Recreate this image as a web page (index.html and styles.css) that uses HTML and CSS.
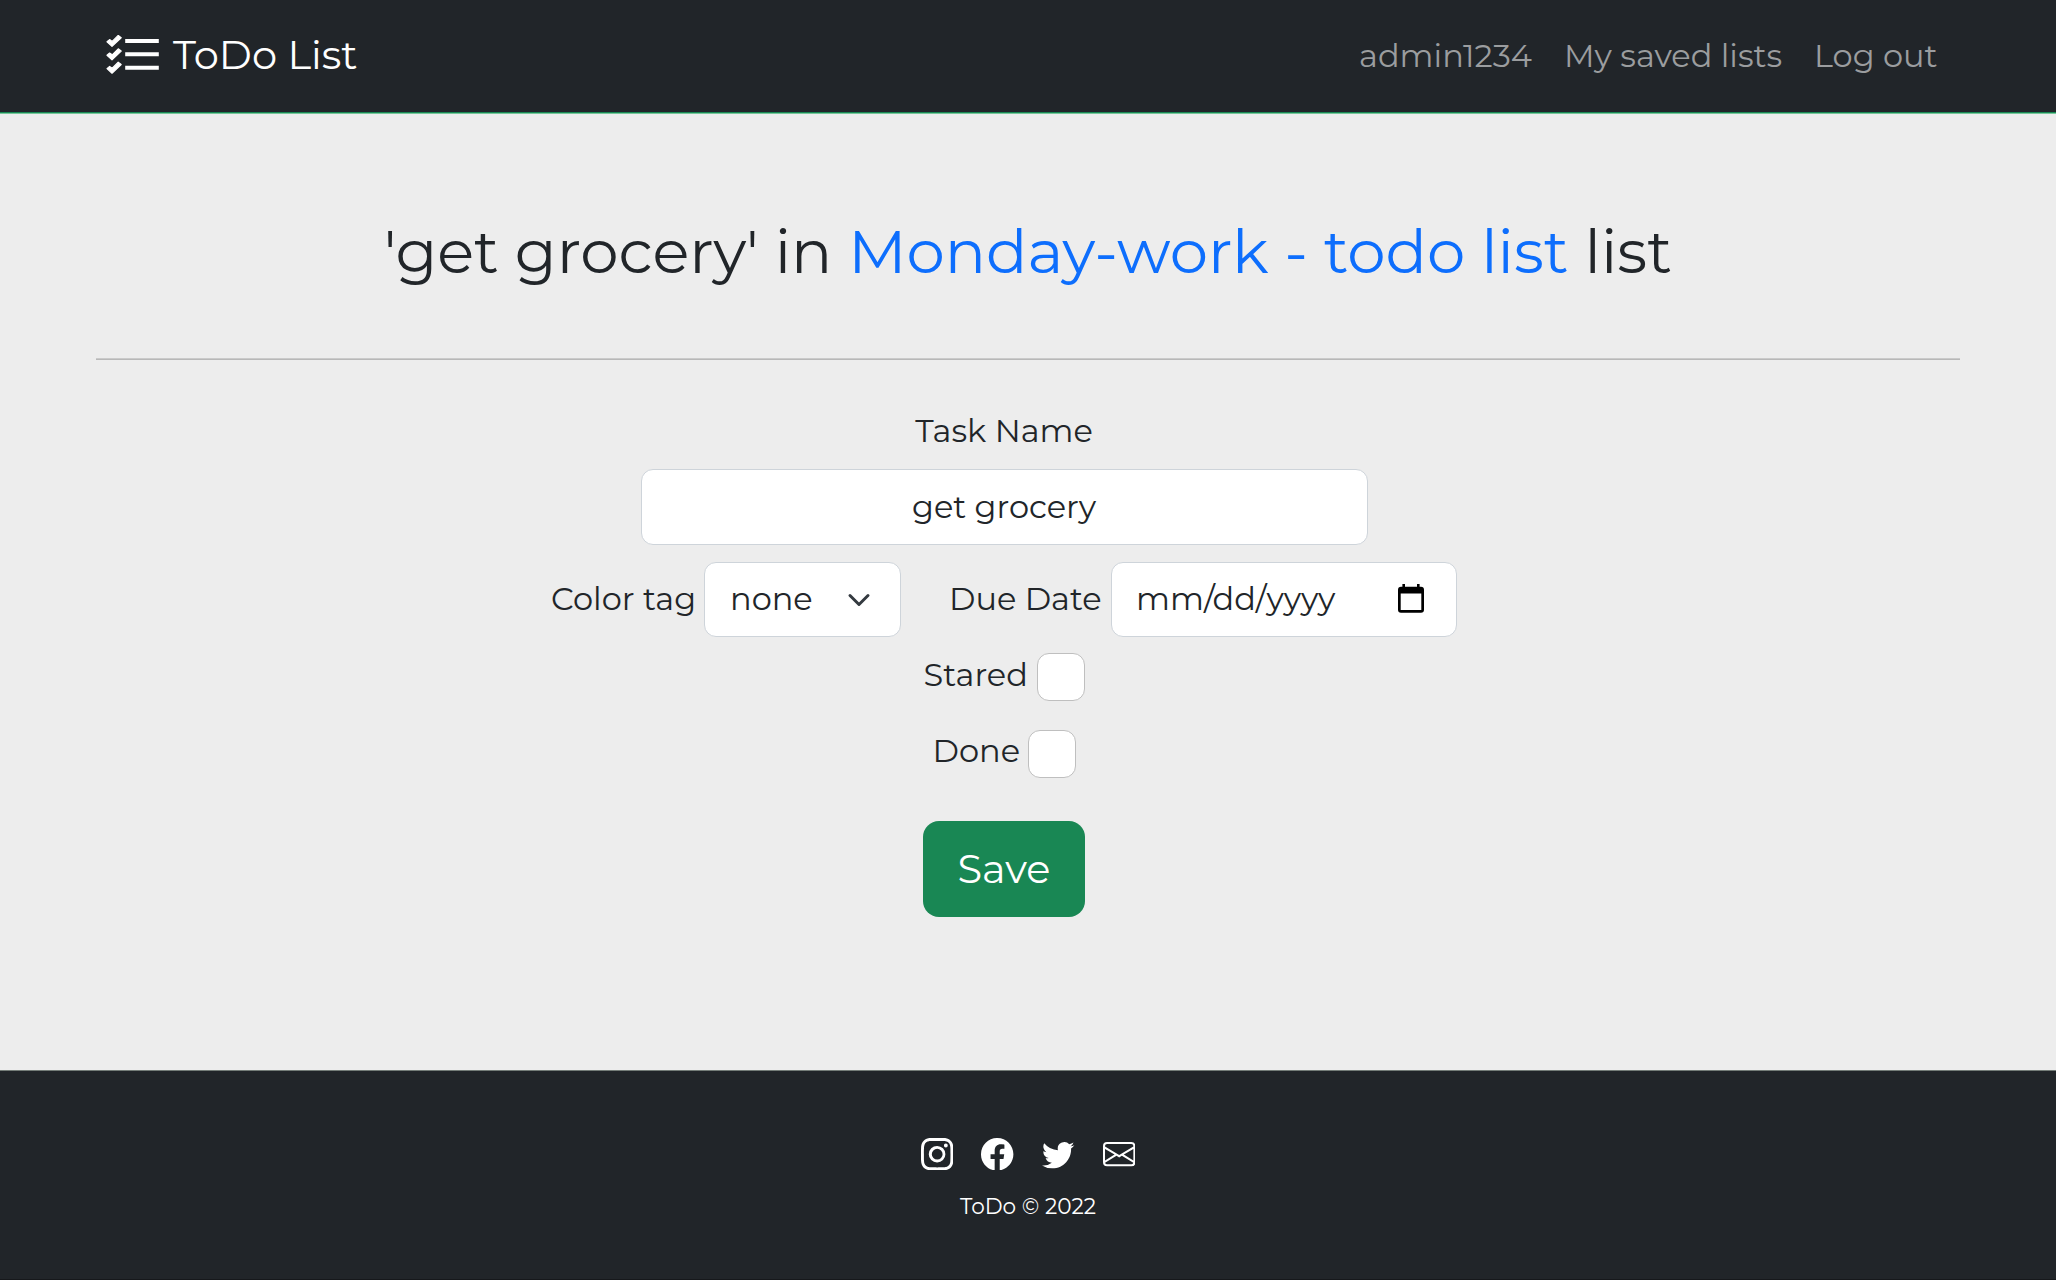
FILE: index.html
```
<!DOCTYPE html>
<html lang="en">
<head>
<meta charset="utf-8">
<title>ToDo List</title>
<link rel="stylesheet" href="styles.css">
</head>
<body>
<header class="navbar">
  <a class="brand" href="#">
    <svg class="brand-icon" width="54" height="40" viewBox="0 0 54 40" fill="#fff">
      <path id="tick" d="M1 6.800 3.600 4.600 6.200 6.400 12.200.400 15.200 2.700 6 11.400z" stroke="#fff" stroke-width="1.200" stroke-linejoin="round"/>
      <use href="#tick" y="13.400"/>
      <use href="#tick" y="26.800"/>
      <path d="M19.200 4h33.600v4H19.200zM19.200 17.200h33.600v4H19.200zM19.200 30.800h33.600v4H19.200z"/>
    </svg>
    <span>ToDo List</span>
  </a>
  <nav class="links">
    <a href="#">admin1234</a>
    <a href="#">My saved lists</a>
    <a href="#">Log out</a>
  </nav>
</header>
<main>
  <h1>'get grocery' in <a href="#">Monday-work - todo list</a> list</h1>
  <div class="rule"></div>
  <form class="task">
    <label class="name-label" for="name">Task Name</label>
    <input class="field name" id="name" type="text" value="get grocery">
    <div class="row">
      <span class="color-label">Color tag</span>
      <div class="field select">
        <span>none</span>
        <svg width="24" height="24" viewBox="0 0 16 16" fill="none" stroke="#343a40" stroke-width="2" stroke-linecap="round" stroke-linejoin="round"><path d="m2 5 6 6 6-6"/></svg>
      </div>
      <span class="due-label">Due Date</span>
      <div class="field date">
        <span>mm/dd/yyyy</span>
        <svg width="26" height="29" viewBox="0 0 26 29"><path fill-rule="evenodd" d="M4.400 0h2.600v2.800h12V0h2.600v2.800H23a3 3 0 0 1 3 3V25.800a3 3 0 0 1-3 3H3a3 3 0 0 1-3-3V5.800a3 3 0 0 1 3-3h1.400zM2.700 9.400V26.100H23.300V9.400z"/></svg>
      </div>
    </div>
    <div class="check-row stared"><label for="stared">Stared</label><input id="stared" type="checkbox"></div>
    <div class="check-row done"><label for="done">Done</label><input id="done" type="checkbox"></div>
    <button class="save" type="button">Save</button>
  </form>
</main>
<footer>
  <div class="social">
    <svg viewBox="0 0 16 16"><path d="M8 0C5.829 0 5.556.01 4.703.048 3.850.088 3.269.222 2.760.420a3.917 3.917 0 0 0-1.417.923A3.927 3.927 0 0 0 .420 2.760C.222 3.268.087 3.850.048 4.700.010 5.555 0 5.827 0 8.001c0 2.172.010 2.444.048 3.297.040.852.174 1.433.372 1.942.205.526.478.972.923 1.417.444.445.890.719 1.416.923.510.198 1.090.333 1.942.372C5.555 15.990 5.827 16 8 16s2.444-.010 3.298-.048c.851-.040 1.434-.174 1.943-.372a3.916 3.916 0 0 0 1.416-.923c.445-.445.718-.891.923-1.417.197-.509.332-1.090.372-1.942C15.990 10.445 16 10.173 16 8s-.010-2.445-.048-3.299c-.040-.851-.175-1.433-.372-1.941a3.926 3.926 0 0 0-.923-1.417A3.911 3.911 0 0 0 13.240.420c-.510-.198-1.092-.333-1.943-.372C10.443.010 10.172 0 7.998 0h.003zm-.717 1.442h.718c2.136 0 2.389.007 3.232.046.780.035 1.204.166 1.486.275.373.145.640.319.920.599.280.280.453.546.598.920.110.281.240.705.275 1.485.039.843.047 1.096.047 3.231s-.008 2.389-.047 3.232c-.035.780-.166 1.203-.275 1.485a2.470 2.470 0 0 1-.599.919c-.280.280-.546.453-.920.598-.280.110-.704.240-1.485.276-.843.038-1.096.047-3.232.047s-2.390-.009-3.233-.047c-.780-.036-1.203-.166-1.485-.276a2.478 2.478 0 0 1-.920-.598 2.480 2.480 0 0 1-.600-.920c-.109-.281-.240-.705-.275-1.485-.038-.843-.046-1.096-.046-3.233 0-2.136.008-2.388.046-3.231.036-.780.166-1.204.276-1.486.145-.373.319-.640.599-.920.280-.280.546-.453.920-.598.282-.110.705-.240 1.485-.276.738-.034 1.024-.044 2.515-.045v.002zm4.988 1.328a.960.960 0 1 0 0 1.920.960.960 0 0 0 0-1.920zm-4.270 1.122a4.109 4.109 0 1 0 0 8.217 4.109 4.109 0 0 0 0-8.217zm0 1.441a2.667 2.667 0 1 1 0 5.334 2.667 2.667 0 0 1 0-5.334z"/></svg>
    <svg viewBox="0 0 16 16"><path d="M16 8.049c0-4.446-3.582-8.050-8-8.050C3.580 0-.002 3.603-.002 8.050c0 4.017 2.926 7.347 6.750 7.951v-5.625h-2.030V8.050H6.750V6.275c0-2.017 1.195-3.131 3.022-3.131.876 0 1.791.157 1.791.157v1.980h-1.009c-.993 0-1.303.621-1.303 1.258v1.510h2.218l-.354 2.326H9.250V16c3.824-.604 6.750-3.934 6.750-7.951z"/></svg>
    <svg viewBox="0 0 16 16"><path d="M5.026 15c6.038 0 9.341-5.003 9.341-9.334 0-.140 0-.282-.006-.422A6.685 6.685 0 0 0 16 3.542a6.658 6.658 0 0 1-1.889.518 3.301 3.301 0 0 0 1.447-1.817 6.533 6.533 0 0 1-2.087.793A3.286 3.286 0 0 0 7.875 6.030a9.325 9.325 0 0 1-6.767-3.429 3.289 3.289 0 0 0 1.018 4.382A3.323 3.323 0 0 1 .640 6.575v.045a3.288 3.288 0 0 0 2.632 3.218 3.203 3.203 0 0 1-.865.115 3.230 3.230 0 0 1-.614-.057 3.283 3.283 0 0 0 3.067 2.277A6.588 6.588 0 0 1 .780 13.580a6.320 6.320 0 0 1-.780-.045A9.344 9.344 0 0 0 5.026 15z"/></svg>
    <svg viewBox="0 0 16 16"><path d="M0 4a2 2 0 0 1 2-2h12a2 2 0 0 1 2 2v8a2 2 0 0 1-2 2H2a2 2 0 0 1-2-2V4Zm2-1a1 1 0 0 0-1 1v.217l7 4.200 7-4.200V4a1 1 0 0 0-1-1H2Zm13 2.383-4.708 2.825L15 11.105V5.383Zm-.034 6.876-5.640-3.471L8 9.583l-1.326-.795-5.640 3.470A1 1 0 0 0 2 13h12a1 1 0 0 0 .966-.741ZM1 11.105l4.708-2.897L1 5.383v5.722Z"/></svg>
  </div>
  <p>ToDo © 2022</p>
</footer>
</body>
</html>
```
FILE: styles.css
```
* { box-sizing: border-box; }
body {
  margin: 0;
  height: 1280px;
  display: flex;
  flex-direction: column;
  background: #ededed;
  color: #212529;
  font: 400 32px/46px Montserrat, Inter, sans-serif;
}
a { text-decoration: none; }

.navbar {
  height: 113px;
  padding: 0 96px 2px 106px;
  display: flex;
  align-items: center;
  justify-content: space-between;
  background: #212529;
  border-bottom: 1px solid #198754;
}
.brand {
  display: flex;
  align-items: center;
  gap: 13px;
  color: #fff;
  font-size: 40px;
}
.links { display: grid; grid-template-columns: 205px 250px 146px; padding-top: 2px; }
.links a { color: #9b9d9f; white-space: nowrap; }

main {
  flex: 1;
  padding: 107px 96px 0;
  border-top: 1px solid #76c79a;
}
h1 {
  margin: 0;
  text-align: center;
  font-size: 61px;
  font-weight: 400;
  line-height: 60px;
}
h1 a { color: #0d6efd; }
.rule {
  height: 2px;
  margin-top: 77px;
  background: #b8b8b8;
  border-top: 1px solid #cacaca;
}

.task {
  display: flex;
  flex-direction: column;
  align-items: center;
  padding: 48px 48px 0 0;
}
.field {
  background: #fff;
  border: 1px solid #ced4da;
  border-radius: 12px;
}
.name {
  width: 727px;
  height: 76px;
  margin-top: 15px;
  padding: 0 0 2px;
  text-align: center;
  color: #212529;
  font: inherit;
}
.row { display: flex; align-items: center; margin-top: 17px; white-space: nowrap; }
.row span { padding-bottom: 2px; }
.color-label { width: 153px; }
.select, .date {
  height: 75px;
  display: flex;
  align-items: center;
  justify-content: space-between;
}
.select { width: 197px; padding: 0 29px 0 25px; }
.due-label { width: 162px; margin-left: 48px; }
.date { width: 346px; padding: 0 32px 0 24px; }
.date svg { margin-bottom: 3px; }

.check-row { display: flex; align-items: center; height: 48px; margin-top: 16px; }
.check-row label { padding-bottom: 5px; }
.stared label { width: 113px; }
.done { margin-top: 29px; }
.done label { width: 95px; padding-bottom: 6px; }
.check-row input {
  appearance: none;
  width: 48px;
  height: 48px;
  margin: 0;
  background: #fff;
  border: 1px solid #bfbfbf;
  border-radius: 12px;
}
.save {
  width: 162px;
  height: 96px;
  margin-top: 43px;
  padding: 0 0 1px;
  border: 0;
  border-radius: 16px;
  background: #198754;
  color: #fff;
  font: inherit;
  font-size: 40px;
}

footer {
  height: 210px;
  padding-top: 67px;
  display: flex;
  flex-direction: column;
  align-items: center;
  background: #212529;
  border-top: 1px solid #747d78;
  border-bottom: 1px solid #16181b;
  color: #fff;
}
.social { display: flex; gap: 28.3px; }
.social svg { width: 32.4px; height: 32.4px; fill: #fff; }
footer p { margin: 20px 0 0; font-size: 21.6px; line-height: 32px; }
```
